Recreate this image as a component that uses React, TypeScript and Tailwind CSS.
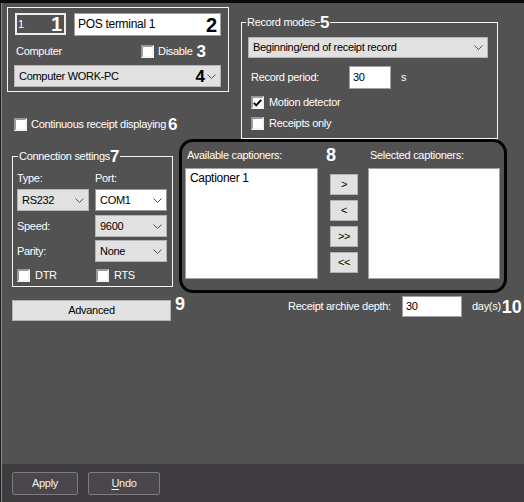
import type { ReactNode } from 'react'

const BG = 'bg-[#525252]'

function Chevron() {
  return (
    <svg width="9" height="5" viewBox="0 0 9 5" className="shrink-0">
      <polyline points="0.5,0.5 4.5,4.5 8.5,0.5" fill="none" stroke="#505050" strokeWidth="1" />
    </svg>
  )
}

function Check({ checked = false }: { checked?: boolean }) {
  return (
    <span className="flex h-[13px] w-[13px] shrink-0 items-center justify-center border-2 border-t-[#9a9a9a] border-l-[#9a9a9a] border-b-[#f2f2f2] border-r-[#f2f2f2] bg-white">
      {checked ? (
        <svg width="9" height="8" viewBox="0 0 9 8">
          <polyline points="0.8,3.8 3.2,6.4 8.2,0.8" fill="none" stroke="#000" strokeWidth="1.9" />
        </svg>
      ) : null}
    </span>
  )
}

function Select({
  className,
  value,
  white = false,
  extra,
}: {
  className: string
  value: string
  white?: boolean
  extra?: ReactNode
}) {
  return (
    <div
      className={`flex items-center border pl-[4px] pr-[4px] text-black ${
        white ? 'border-[#9a9a9a] bg-white' : 'border-[#b4b4b4] bg-[#e1e1e1]'
      } ${className}`}
    >
      <span className="flex-1 truncate">{value}</span>
      {extra}
      <Chevron />
    </div>
  )
}

function Num({ children, dark = false, className = '' }: { children: ReactNode; dark?: boolean; className?: string }) {
  return (
    <span
      className={`font-bold text-[17px] leading-none tracking-normal ${dark ? 'text-black' : 'text-white'} ${className}`}
    >
      {children}
    </span>
  )
}

function SmallBtn({ label }: { label: string }) {
  return (
    <div className="flex h-[21px] w-[28px] items-center justify-center border border-[#b4b4b4] bg-[#e1e1e1] text-black">
      {label}
    </div>
  )
}

export default function App() {
  return (
    <div className="h-[502px] w-[524px] overflow-hidden border-t-[3px] border-t-[#0b0b0b] bg-[#1f1f1f] font-['Liberation_Sans',Arial,sans-serif] text-[11px] leading-[13px] tracking-[-0.3px] text-white">
      <div className={`ml-[1px] flex h-full flex-col border-l border-l-[#8a8a8a] ${BG}`}>
        {/* top: general + record modes */}
        <div className="flex items-start">
          <div className="ml-[5px] mt-[4px] w-[222px]">
            <div className="h-[85px] border border-[#f4f4f4]">
              <div className="ml-[7px] mt-[5px] flex gap-[8px]">
                <div className="flex h-[22px] w-[51px] items-center justify-between border-2 border-[#efefef] pl-[1px] pr-[2px]">
                  <span>1</span>
                  <Num className="text-[20px]">1</Num>
                </div>
                <div className="flex h-[23px] w-[147px] items-center border border-[#a0a0a0] bg-white pl-[3px] pr-[3px] text-black">
                  <span className="flex-1 text-[12px]">POS terminal 1</span>
                  <Num dark className="text-[20px]">2</Num>
                </div>
              </div>
              <div className="mt-[9px] flex h-[13px] items-center">
                <span className="ml-[8px] w-[125px]">Computer</span>
                <Check />
                <span className="ml-[4px]">Disable</span>
                <Num className="ml-[4px]">3</Num>
              </div>
              <Select
                className="ml-[6px] mt-[7px] h-[22px] w-[207px]"
                value="Computer WORK-PC"
                extra={<Num dark className="mr-[2px]">4</Num>}
              />
            </div>
            <div className="ml-[7px] mt-[26px] flex h-[13px] items-center">
              <Check />
              <span className="ml-[4px] w-[137px]">Continuous receipt displaying</span>
              <Num>6</Num>
            </div>
          </div>

          <div className="relative ml-[12px] mt-[19px] h-[117px] w-[257px] border border-[#f4f4f4]">
            <div className="absolute -top-[9px] left-[4px] flex h-[17px] items-center gap-[5px]">
              <span className={`${BG} pl-[1px]`}>Record modes</span>
              <Num className={`${BG} pr-[1px]`}>5</Num>
            </div>
            <Select className="ml-[6px] mt-[14px] h-[21px] w-[240px]" value="Beginning/end of receipt record" />
            <div className="ml-[9px] mt-[8px] flex h-[23px] items-center">
              <span className="w-[98px]">Record period:</span>
              <div className="flex h-[23px] w-[42px] items-center border border-[#a0a0a0] bg-white pl-[3px] text-black">30</div>
              <span className="ml-[10px]">s</span>
            </div>
            <div className="ml-[9px] mt-[7px] flex h-[13px] items-center">
              <Check checked />
              <span className="ml-[5px]">Motion detector</span>
            </div>
            <div className="ml-[9px] mt-[8px] flex h-[13px] items-center">
              <Check />
              <span className="ml-[5px]">Receipts only</span>
            </div>
          </div>
        </div>

        {/* middle: connection + captioners */}
        <div className="flex items-start">
          <div className="relative ml-[10px] mt-[17px] h-[131px] w-[161px] border border-[#f4f4f4]">
            <div className="absolute -top-[9px] left-[5px] flex h-[17px] items-center">
              <span className={`${BG} pl-[1px]`}>Connection settings</span>
              <Num className={`${BG} pr-[1px]`}>7</Num>
            </div>
            <div className="ml-[4px] mt-[15px] flex h-[13px] items-center">
              <span className="w-[78px]">Type:</span>
              <span>Port:</span>
            </div>
            <div className="ml-[4px] mt-[4px] flex gap-[6px]">
              <Select className="h-[22px] w-[72px]" value="RS232" />
              <Select className="h-[22px] w-[72px]" value="COM1" white />
            </div>
            <div className="ml-[4px] mt-[4px] flex items-center">
              <span className="w-[78px]">Speed:</span>
              <Select className="h-[22px] w-[72px]" value="9600" />
            </div>
            <div className="ml-[4px] mt-[3px] flex items-center">
              <span className="w-[78px]">Parity:</span>
              <Select className="h-[22px] w-[72px]" value="None" />
            </div>
            <div className="ml-[4px] mt-[7px] flex h-[13px] items-center">
              <Check />
              <span className="ml-[5px] w-[61px]">DTR</span>
              <Check />
              <span className="ml-[5px]">RTS</span>
            </div>
          </div>

          <div className="ml-[6px] h-[154px] w-[328px] rounded-[14px] border-[3px] border-[#050505]">
            <div className="flex h-[26px] items-center">
              <span className="ml-[5px] w-[139px]">Available captioners:</span>
              <Num className="w-[44px] text-[18px]">8</Num>
              <span>Selected captioners:</span>
            </div>
            <div className="flex items-start">
              <div className="ml-[3px] h-[111px] w-[133px] border border-[#a0a0a0] bg-white pl-[4px] pt-[3px] text-[12px] text-black">
                Captioner 1
              </div>
              <div className="ml-[12px] mt-[6px] flex flex-col gap-[5px]">
                <SmallBtn label=">" />
                <SmallBtn label="<" />
                <SmallBtn label=">>" />
                <SmallBtn label="<<" />
              </div>
              <div className="ml-[10px] h-[111px] w-[132px] border border-[#a0a0a0] bg-white" />
            </div>
          </div>
        </div>

        {/* advanced + archive depth */}
        <div className="flex items-start">
          <div className="ml-[10px] mt-[7px] flex h-[21px] w-[159px] items-center justify-center border border-[#b4b4b4] bg-[#e1e1e1] text-black">
            Advanced
          </div>
          <Num className="ml-[4px] mt-[2px] text-[18px]">9</Num>
          <div className="ml-[103px] mt-[3px] flex h-[21px] items-center">
            <span className="w-[114px]">Receipt archive depth:</span>
            <div className="flex h-[21px] w-[60px] items-center border border-[#a0a0a0] bg-white pl-[3px] text-black">30</div>
            <span className="ml-[10px]">day(s)</span>
            <Num className="ml-[1px] text-[18px]">10</Num>
          </div>
        </div>

        {/* bottom bar */}
        <div className="mt-auto flex h-[38px] items-start bg-[#3e3c3f] pl-[10px] pt-[8px]">
          <div className="flex h-[23px] w-[66px] items-center justify-center rounded-[2px] border border-[#7d7b80] bg-[#49474b] text-[#f2f2f2]">
            Apply
          </div>
          <div className="ml-[10px] flex h-[23px] w-[72px] items-center justify-center rounded-[2px] border border-[#7d7b80] bg-[#49474b] text-[#f2f2f2]">
            <span className="underline underline-offset-2">U</span>ndo
          </div>
        </div>
      </div>
    </div>
  )
}
